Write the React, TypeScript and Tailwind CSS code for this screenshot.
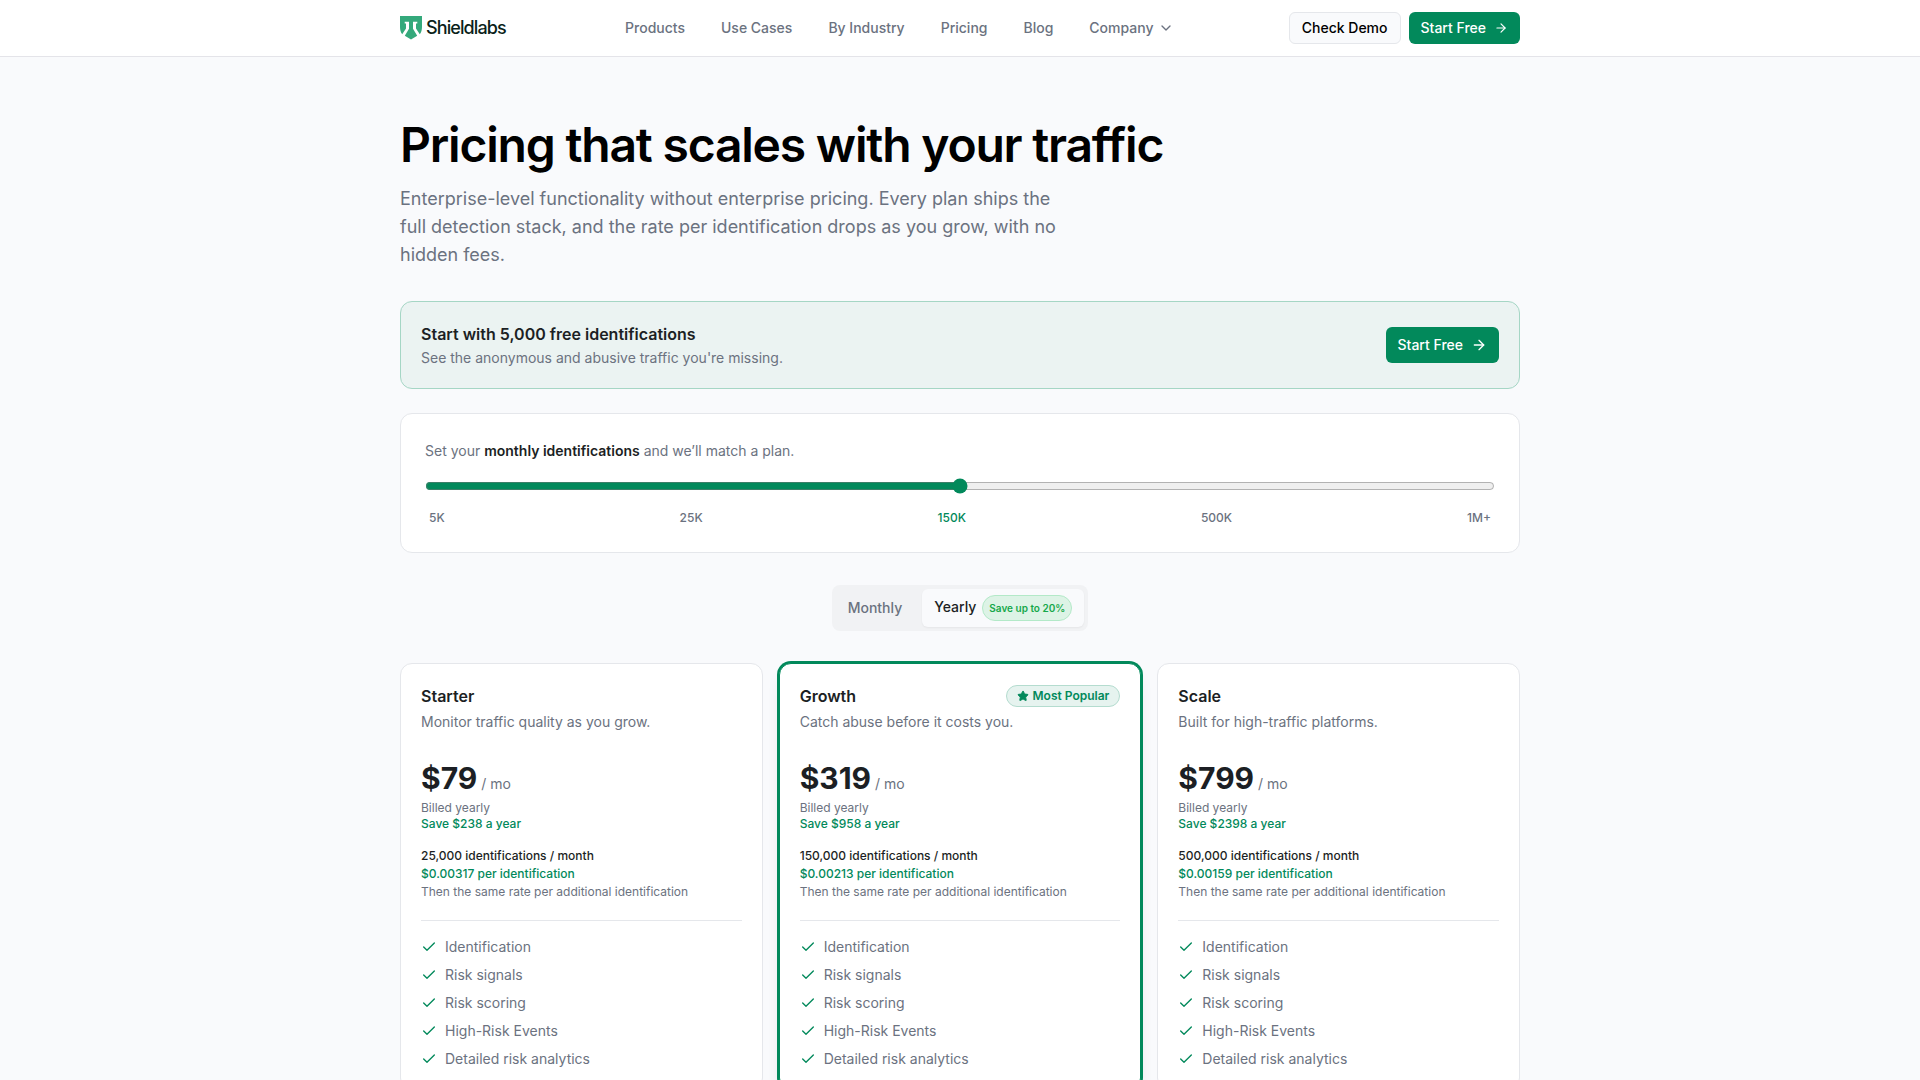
import { useState } from 'react';
import { ArrowRight, Check, ChevronDown, Star } from 'lucide-react';

interface Plan {
  name: string;
  tagline: string;
  price: number;
  saving: number;
  volume: string;
  rate: string;
  popular?: boolean;
}

const navLinks = ['Products', 'Use Cases', 'By Industry', 'Pricing', 'Blog'];

const steps = ['5K', '25K', '150K', '500K', '1M+'];

const plans: Plan[] = [
  {
    name: 'Starter',
    tagline: 'Monitor traffic quality as you grow.',
    price: 79,
    saving: 238,
    volume: '25,000',
    rate: '$0.00317',
  },
  {
    name: 'Growth',
    tagline: 'Catch abuse before it costs you.',
    price: 319,
    saving: 958,
    volume: '150,000',
    rate: '$0.00213',
    popular: true,
  },
  {
    name: 'Scale',
    tagline: 'Built for high-traffic platforms.',
    price: 799,
    saving: 2398,
    volume: '500,000',
    rate: '$0.00159',
  },
];

const features = [
  'Identification',
  'Risk signals',
  'Risk scoring',
  'High-Risk Events',
  'Detailed risk analytics',
];

function Logo() {
  return (
    <a href="#" className="flex items-center gap-1 text-[#0b1f1a]">
      <svg width="22" height="24" viewBox="0 0 22 24" aria-hidden="true">
        <path
          fill="#34a97b"
          d="M0 0h22v11c0 3-.7 5.200-2.200 7.200L16 12.500V7.500h1.300V5.700H13v7l4.200 7.100L11 23.500l-6.200-3.700L9 12.700v-7H4.700v1.800H6v5L2.200 18.200C.7 16.200 0 14 0 11z"
        />
      </svg>
      <span className="text-lg font-medium tracking-tighter">Shieldlabs</span>
    </a>
  );
}

function Header() {
  return (
    <header className="border-b border-[#e4e4e9] bg-white">
      <div className="mx-auto flex h-14 max-w-[1120px] items-center justify-between">
        <Logo />
        <nav className="flex items-center gap-9 pl-1 text-sm font-medium text-[#6b7280]">
          {navLinks.map((link) => (
            <a key={link} href="#">
              {link}
            </a>
          ))}
          <button type="button" className="flex items-center gap-1">
            Company
            <ChevronDown className="h-4 w-4" />
          </button>
        </nav>
        <div className="flex items-center gap-2 text-sm font-medium">
          <a
            href="#"
            className="flex h-8 items-center rounded-md border border-[#e5e7eb] bg-[#f9fafc] px-3 text-black"
          >
            Check Demo
          </a>
          <a
            href="#"
            className="flex h-8 items-center gap-2 rounded-md bg-[#02895b] px-3 text-white"
          >
            Start Free
            <ArrowRight className="h-3.5 w-3.5" />
          </a>
        </div>
      </div>
    </header>
  );
}

function PlanCard({ plan, yearly }: { plan: Plan; yearly: boolean }) {
  return (
    <article
      className={`rounded-xl border bg-white p-5 ${
        plan.popular
          ? 'border-[#02895b] shadow-lg ring-2 ring-[#02895b]'
          : 'border-[#e5e7eb]'
      }`}
    >
      <div className="flex h-6 items-center justify-between">
        <h2 className="text-base font-semibold">{plan.name}</h2>
        {plan.popular && (
          <span className="flex items-center gap-1 rounded-full border border-[#b4dccf] bg-[#e6f3ef] px-2.5 py-0.5 text-xs font-semibold text-[#02895b]">
            <Star className="h-3 w-3 fill-current" />
            Most Popular
          </span>
        )}
      </div>
      <p className="mt-1 text-sm text-[#6b7280]">{plan.tagline}</p>

      <p className="mt-7 mb-1 flex items-baseline gap-1">
        <span className="text-3xl font-bold">${plan.price}</span>
        <span className="text-sm text-[#6b7280]">/ mo</span>
      </p>
      <p className="text-xs text-[#6b7280]">{yearly ? 'Billed yearly' : 'Billed monthly'}</p>
      <p className="text-xs font-medium text-[#02895b]">Save ${plan.saving} a year</p>

      <div className="mt-4 space-y-0.5 text-xs">
        <p className="font-medium">{plan.volume} identifications / month</p>
        <p className="font-medium text-[#02895b]">{plan.rate} per identification</p>
        <p className="text-[#6b7280]">Then the same rate per additional identification</p>
      </div>

      <ul className="mt-5 space-y-2 border-t border-[#e5e7eb] pt-4 text-sm text-[#6b7280]">
        {features.map((feature) => (
          <li key={feature} className="flex items-center gap-2">
            <Check className="h-4 w-4 text-[#02895b]" />
            {feature}
          </li>
        ))}
      </ul>
    </article>
  );
}

export default function App() {
  const [step, setStep] = useState(2);
  const [yearly, setYearly] = useState(true);

  return (
    <div className="min-h-screen bg-[#f9fafc] font-[Inter,sans-serif] text-[#1c1f24]">
      <Header />

      <main className="mx-auto max-w-[1120px] pt-16 pb-16">
        <h1 className="text-5xl leading-12 font-semibold tracking-tight text-black">
          Pricing that scales with your traffic
        </h1>
        <p className="mt-4 max-w-2xl text-lg leading-7 text-[#6b7280]">
          Enterprise-level functionality without enterprise pricing. Every plan ships the full
          detection stack, and the rate per identification drops as you grow, with no hidden fees.
        </p>

        {/* Free tier banner */}
        <section className="mt-8 flex items-center justify-between rounded-xl border border-[#a5d6c5] bg-[#ebf3f2] p-5">
          <div className="space-y-0.5">
            <h2 className="text-base font-semibold">Start with 5,000 free identifications</h2>
            <p className="text-sm text-[#6b7280]">
              See the anonymous and abusive traffic you're missing.
            </p>
          </div>
          <a
            href="#"
            className="flex h-9 items-center gap-2 rounded-md bg-[#02895b] px-3 text-sm font-medium text-white"
          >
            Start Free
            <ArrowRight className="h-4 w-4" />
          </a>
        </section>

        {/* Volume slider */}
        <section className="mt-6 rounded-xl border border-[#e5e7eb] bg-white p-6">
          <label htmlFor="volume" className="block text-sm leading-[26px] text-[#6b7280]">
            Set your <strong className="font-semibold text-[#1c1f24]">monthly identifications</strong>{' '}
            and we’ll match a plan.
          </label>
          <input
            id="volume"
            type="range"
            min={0}
            max={steps.length - 1}
            value={step}
            onChange={(e) => setStep(Number(e.target.value))}
            className="mt-3.5 block w-full accent-[#02895b]"
          />
          <div className="mt-3.5 flex justify-between px-1 text-xs leading-5 font-medium text-[#6b7280]">
            {steps.map((label, i) => (
              <button
                key={label}
                type="button"
                onClick={() => setStep(i)}
                className={i === step ? 'text-[#02895b]' : ''}
              >
                {label}
              </button>
            ))}
          </div>
        </section>

        {/* Billing period */}
        <div className="mt-8 flex justify-center">
          <div className="flex rounded-lg bg-[#f1f2f4] p-1 text-sm font-medium">
            <button
              type="button"
              onClick={() => setYearly(false)}
              className={`rounded-md px-3 ${
                yearly ? 'text-[#6b7280]' : 'bg-[#f9fafc] shadow-xs'
              }`}
            >
              Monthly
            </button>
            <button
              type="button"
              onClick={() => setYearly(true)}
              className={`ml-2 rounded-md px-3 py-1.5 ${
                yearly ? 'bg-[#f9fafc] shadow-xs' : 'text-[#6b7280]'
              }`}
            >
              Yearly
              <span className="ml-1.5 inline-block rounded-full border border-[#b3e9c8] bg-[#ddf3e6] px-1.5 py-1 align-middle text-[10px] leading-4 font-semibold text-[#16a84a]">
                Save up to 20%
              </span>
            </button>
          </div>
        </div>

        {/* Plans */}
        <div className="mt-8 grid grid-cols-3 gap-4">
          {plans.map((plan) => (
            <PlanCard key={plan.name} plan={plan} yearly={yearly} />
          ))}
        </div>
      </main>
    </div>
  );
}
